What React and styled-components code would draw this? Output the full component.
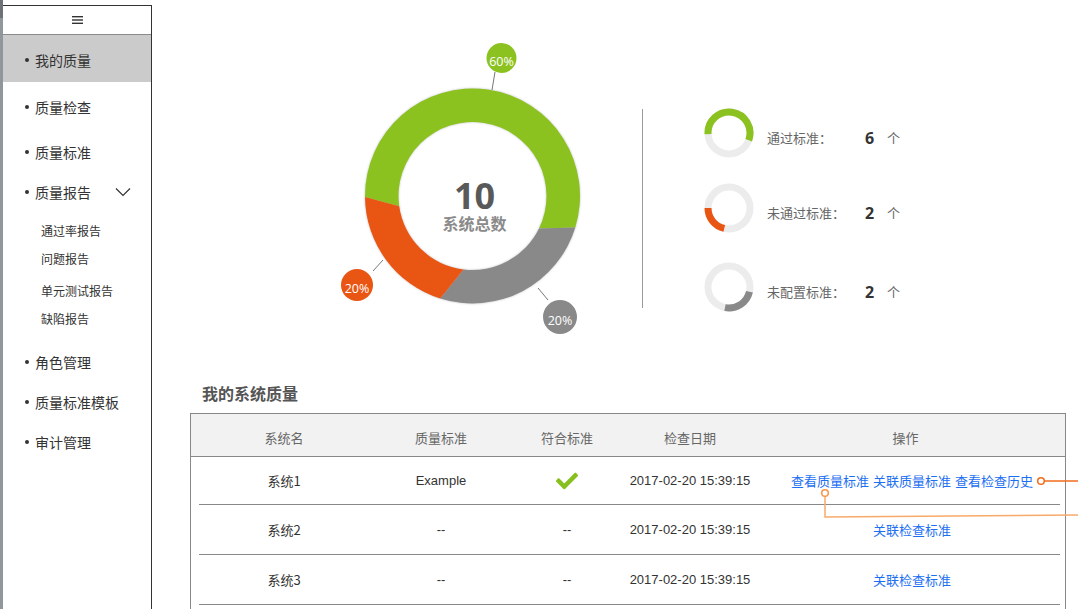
import React from "react";
import styled, { createGlobalStyle } from "styled-components";
import { FaCheck } from "react-icons/fa";

const GlobalStyle = createGlobalStyle`
  html, body { margin: 0; padding: 0; background: #fff; overflow: hidden; }
  body { font-family: "Liberation Sans", "Noto Sans CJK SC", sans-serif; color: #333; }
`;

const Page = styled.div`
  position: relative;
  display: flex;
  width: 1078px;
  height: 609px;
  overflow: hidden;
  background: #fff;
`;

const EdgeStrip = styled.div`
  width: 3px;
  flex: none;
  background: linear-gradient(#6c7278 0 18px, #8f969c 18px);
`;

const Sidebar = styled.nav`
  width: 148px;
  flex: none;
  margin-top: 5px;
  border-top: 1px solid #333;
  border-right: 1px solid #333;
  display: flex;
  flex-direction: column;
  font-family: "Noto Sans CJK SC", sans-serif;
`;

const MenuHeader = styled.div`
  height: 28px;
  border-bottom: 1px solid #8a8a8a;
  display: flex;
  align-items: center;
  justify-content: center;
`;

const MenuItem = styled.div`
  box-sizing: border-box;
  height: ${(p) => p.$h}px;
  padding-top: ${(p) => p.$pt || 0}px;
  padding-bottom: 2px;
  margin-top: ${(p) => p.$mt || 0}px;
  padding-left: 22px;
  padding-right: 20px;
  display: flex;
  align-items: center;
  background: ${(p) => (p.$active ? "#cbcbcb" : "transparent")};
  font-size: 14px;
  line-height: 20px;
  color: #333;
  &::before {
    content: "";
    width: 4px;
    height: 4px;
    border-radius: 50%;
    background: #333;
    margin-right: 6px;
    flex: none;
  }
`;

const SubMenu = styled.div`
  display: flex;
  flex-direction: column;
  padding-top: 5px;
`;

const SubItem = styled.div`
  height: 28px;
  margin-top: ${(p) => p.$mt || 0}px;
  padding-left: 38px;
  display: flex;
  align-items: center;
  font-size: 12px;
  line-height: 18px;
  color: #333;
`;

const Chevron = styled.svg`
  margin-left: auto;
  flex: none;
`;

const Main = styled.main`
  flex: 1;
  display: flex;
  flex-direction: column;
`;

const TopSection = styled.section`
  display: flex;
  align-items: flex-start;
  margin-top: 40px;
  padding-left: 178px;
`;

const DonutWrap = styled.div`
  position: relative;
  width: 270px;
  height: 300px;
  flex: none;
`;

const CenterLabel = styled.div`
  position: absolute;
  left: 144.5px;
  top: 139px;
  transform: translateX(-50%);
  display: flex;
  flex-direction: column;
  align-items: center;
  white-space: nowrap;
`;

const BigNumber = styled.div`
  font-family: "Open Sans", sans-serif;
  font-weight: 700;
  font-size: 36px;
  line-height: 34px;
  color: #595959;
`;

const BigCaption = styled.div`
  font-family: "Noto Sans CJK SC", sans-serif;
  font-weight: 700;
  font-size: 16px;
  line-height: 20px;
  color: #8a8a8a;
`;

const Divider = styled.div`
  width: 1px;
  height: 199px;
  background: #9a9a9a;
  margin-left: 42px;
  margin-top: 69px;
  flex: none;
`;

const Legend = styled.div`
  display: flex;
  flex-direction: column;
  margin-left: 61px;
  margin-top: 68px;
`;

const LegendRow = styled.div`
  display: flex;
  align-items: flex-start;
  height: 50px;
  margin-top: ${(p) => p.$mt || 0}px;
`;

const LegendLabel = styled.span`
  width: 98px;
  margin-left: 13px;
  margin-top: 21px;
  font-family: "Noto Sans CJK SC", sans-serif;
  font-size: 13px;
  line-height: 18px;
  color: #666;
`;

const LegendNumber = styled.span`
  width: 22px;
  margin-top: 21px;
  font-family: "Open Sans", sans-serif;
  font-weight: 700;
  font-size: 16px;
  line-height: 18px;
  color: #333;
`;

const LegendUnit = styled.span`
  margin-top: 21px;
  font-family: "Noto Sans CJK SC", sans-serif;
  font-size: 13px;
  line-height: 18px;
  color: #666;
`;

const Section = styled.section`
  margin-left: 38px;
  margin-top: 42px;
  width: 876px;
`;

const SectionTitle = styled.h2`
  margin: 0 0 9px;
  padding-left: 12px;
  font-family: "Noto Sans CJK SC", sans-serif;
  font-size: 16px;
  line-height: 22px;
  font-weight: 700;
  color: #555;
`;

const Table = styled.div`
  box-sizing: border-box;
  width: 876px;
  border: 1px solid #888;
  border-bottom: none;
  padding-bottom: 40px;
`;

const cols = "186px 128px 124px 122px 1fr";

const HeaderRow = styled.div`
  display: grid;
  grid-template-columns: ${cols};
  height: 36px;
  padding-top: 6px;
  background: #f2f2f2;
  border-bottom: 1px solid #888;
  align-items: center;
`;

const HeaderCell = styled.div`
  text-align: center;
  font-family: "Noto Sans CJK SC", sans-serif;
  font-size: 13px;
  line-height: 18px;
  color: #666;
  padding-right: ${(p) => p.$shift || 0}px;
`;

const BodyRow = styled.div`
  position: relative;
  box-sizing: border-box;
  display: grid;
  grid-template-columns: ${cols};
  height: ${(p) => p.$h}px;
  padding-bottom: 1px;
  align-items: center;
  &::after {
    content: "";
    position: absolute;
    left: 8px;
    right: 5px;
    bottom: 0;
    height: 1px;
    background: #888;
  }
`;

const Cell = styled.div`
  display: flex;
  justify-content: center;
  align-items: center;
  font-family: ${(p) => (p.$cjk ? '"Noto Sans CJK SC", sans-serif' : '"Liberation Sans", sans-serif')};
  font-size: 13px;
  line-height: 18px;
  color: #333;
  white-space: nowrap;
`;

const Links = styled.div`
  display: flex;
  justify-content: center;
  gap: 4px;
  padding-left: 8px;
  font-family: "Noto Sans CJK SC", sans-serif;
  font-size: 13px;
  line-height: 18px;
  white-space: nowrap;
`;

const LinkText = styled.a`
  color: #1d6ff2;
  text-decoration: none;
  cursor: pointer;
`;

const Annotation = styled.svg`
  position: absolute;
  left: 818px;
  top: 474px;
  pointer-events: none;
`;

const C = { cx: 142.5, cy: 156, R: 107.5, r: 74 };
const pt = (rad, deg) => {
  const a = (deg * Math.PI) / 180;
  return [C.cx + rad * Math.cos(a), C.cy + rad * Math.sin(a)];
};
const seg = (o1, o2, i2, i1, large) => {
  const A = pt(C.R, o1);
  const B = pt(C.R, o2);
  const Bi = pt(C.r, i2);
  const Ai = pt(C.r, i1);
  return `M${A[0]} ${A[1]} A${C.R} ${C.R} 0 ${large} 1 ${B[0]} ${B[1]} L${Bi[0]} ${Bi[1]} A${C.r} ${C.r} 0 ${large} 0 ${Ai[0]} ${Ai[1]} Z`;
};

const GREEN = "#8cc220";
const ORANGE = "#e95513";
const GRAY = "#898989";

function Bubble({ x, y, r, color, label, line }) {
  return (
    <g>
      <line x1={line[0]} y1={line[1]} x2={line[2]} y2={line[3]} stroke="#777" strokeWidth="1" />
      <circle cx={x} cy={y} r={r} fill={color} />
      <text
        x={x}
        y={y + 3}
        fill="#fff"
        fontSize="12.5"
        fontFamily="'Open Sans', sans-serif"
        textAnchor="middle"
        dominantBaseline="central"
      >
        {label}
      </text>
    </g>
  );
}

function DonutChart() {
  return (
    <DonutWrap>
      <svg width="270" height="300" viewBox="0 0 270 300">
        <g style={{ filter: "drop-shadow(0 0 1px rgba(0,0,0,0.25))" }}>
          <path d={seg(179.5, 377, 386, 172, 1)} fill={GREEN} />
          <path d={seg(17, 107.5, 97, 26, 0)} fill={GRAY} />
          <path d={seg(107.5, 179.5, 172, 97, 0)} fill={ORANGE} />
        </g>
        <Bubble x={171.5} y={18} r={15} color={GREEN} label="60%" line={[165, 32, 162, 50]} />
        <Bubble x={27} y={245} r={16} color={ORANGE} label="20%" line={[43, 231, 53, 220]} />
        <Bubble x={230} y={277} r={17} color={GRAY} label="20%" line={[208, 248, 218, 260]} />
      </svg>
      <CenterLabel>
        <BigNumber>10</BigNumber>
        <BigCaption>系统总数</BigCaption>
      </CenterLabel>
    </DonutWrap>
  );
}

function MiniRing({ color, from, to }) {
  const r = 21;
  const p = (d) => {
    const a = (d * Math.PI) / 180;
    return [25 + r * Math.cos(a), 25 + r * Math.sin(a)];
  };
  const s = p(from);
  const e = p(to);
  const large = to - from > 180 ? 1 : 0;
  return (
    <svg width="50" height="50" viewBox="0 0 50 50" style={{ flex: "none" }}>
      <circle cx="25" cy="25" r={r} fill="none" stroke="#ececec" strokeWidth="7" />
      <path d={`M${s[0]} ${s[1]} A${r} ${r} 0 ${large} 1 ${e[0]} ${e[1]}`} fill="none" stroke={color} strokeWidth="7" />
    </svg>
  );
}

const legend = [
  { label: "通过标准：", n: 6, color: GREEN, from: 177, to: 380, mt: 0 },
  { label: "未通过标准：", n: 2, color: ORANGE, from: 103, to: 180, mt: 25 },
  { label: "未配置标准：", n: 2, color: GRAY, from: 13, to: 101, mt: 29 },
];

const rows = [
  { name: "系统1", std: "Example", ok: true, date: "2017-02-20 15:39:15", links: ["查看质量标准", "关联质量标准", "查看检查历史"], h: 48 },
  { name: "系统2", std: "--", ok: false, date: "2017-02-20 15:39:15", links: ["关联检查标准"], h: 50 },
  { name: "系统3", std: "--", ok: false, date: "2017-02-20 15:39:15", links: ["关联检查标准"], h: 50 },
];

export default function App() {
  return (
    <Page>
      <GlobalStyle />
      <EdgeStrip />
      <Sidebar>
        <MenuHeader>
          <svg width="11" height="8" viewBox="0 0 11 8">
            <rect x="0" y="0" width="11" height="1.4" fill="#333" />
            <rect x="0" y="3.3" width="11" height="1.4" fill="#333" />
            <rect x="0" y="6.6" width="11" height="1.4" fill="#333" />
          </svg>
        </MenuHeader>
        <MenuItem $h={47} $pt={5} $active>我的质量</MenuItem>
        <MenuItem $h={50} $pt={2}>质量检查</MenuItem>
        <MenuItem $h={42}>质量标准</MenuItem>
        <MenuItem $h={38}>
          质量报告
          <Chevron width="16" height="10" viewBox="0 0 16 10">
            <polyline points="1,1.5 8,8.5 15,1.5" fill="none" stroke="#333" strokeWidth="1.2" />
          </Chevron>
        </MenuItem>
        <SubMenu>
          <SubItem>通过率报告</SubItem>
          <SubItem>问题报告</SubItem>
          <SubItem $mt={4}>单元测试报告</SubItem>
          <SubItem>缺陷报告</SubItem>
        </SubMenu>
        <MenuItem $h={40} $mt={10}>角色管理</MenuItem>
        <MenuItem $h={40}>质量标准模板</MenuItem>
        <MenuItem $h={40}>审计管理</MenuItem>
      </Sidebar>
      <Main>
        <TopSection>
          <DonutChart />
          <Divider />
          <Legend>
            {legend.map((l) => (
              <LegendRow key={l.label} $mt={l.mt}>
                <MiniRing color={l.color} from={l.from} to={l.to} />
                <LegendLabel>{l.label}</LegendLabel>
                <LegendNumber>{l.n}</LegendNumber>
                <LegendUnit>个</LegendUnit>
              </LegendRow>
            ))}
          </Legend>
        </TopSection>
        <Section>
          <SectionTitle>我的系统质量</SectionTitle>
          <Table>
            <HeaderRow>
              <HeaderCell>系统名</HeaderCell>
              <HeaderCell>质量标准</HeaderCell>
              <HeaderCell>符合标准</HeaderCell>
              <HeaderCell>检查日期</HeaderCell>
              <HeaderCell $shift={5}>操作</HeaderCell>
            </HeaderRow>
            {rows.map((r) => (
              <BodyRow key={r.name} $h={r.h}>
                <Cell $cjk>{r.name}</Cell>
                <Cell>{r.std}</Cell>
                <Cell>{r.ok ? <FaCheck size={22} color="#86bf1e" /> : "--"}</Cell>
                <Cell>{r.date}</Cell>
                <Links>
                  {r.links.map((t) => (
                    <LinkText key={t}>{t}</LinkText>
                  ))}
                </Links>
              </BodyRow>
            ))}
          </Table>
        </Section>
      </Main>
      <Annotation width="260" height="50" viewBox="0 0 260 50">
        <line x1="226.5" y1="7" x2="260" y2="7" stroke="#f26b1d" strokeWidth="1.5" />
        <circle cx="223" cy="7" r="3.3" fill="#fff" stroke="#f26b1d" strokeWidth="1.5" />
        <path d="M7 22.5 V43 L260 41" fill="none" stroke="#f8aa6a" strokeWidth="1.5" />
        <circle cx="7" cy="19" r="3.3" fill="#fff" stroke="#f5964a" strokeWidth="1.5" />
      </Annotation>
    </Page>
  );
}
